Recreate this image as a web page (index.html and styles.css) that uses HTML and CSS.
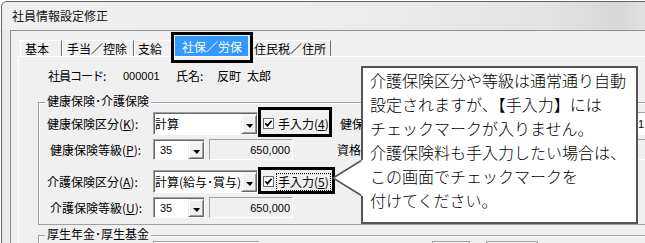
FILE: index.html
```html
<!DOCTYPE html>
<html lang="ja">
<head>
<meta charset="utf-8">
<title>社員情報設定修正</title>
<link rel="stylesheet" href="styles.css">
</head>
<body>
<div class="window">
  <div class="titlebar"><span class="title">社員情報設定修正</span></div>
  <div class="frame">
    <div class="client">
      <div class="tabs">
        <div class="tab tab-kihon">基本</div>
        <div class="tab tab-teate">手当／控除</div>
        <div class="tab tab-shikyu">支給</div>
        <div class="tab tab-sel"><span class="tab-sel-label">社保／労保</span></div>
        <div class="tab tab-jumin">住民税／住所</div>
      </div>
      <div class="panel">
        <div class="emp">
          <span class="emp-code-label">社員コード:</span>
          <span class="emp-code num">000001</span>
          <span class="emp-name-label">氏名:</span>
          <span class="emp-name">反町<span class="mei">太郎</span></span>
        </div>
        <div class="group group-1">
          <div class="group-title">健康保険･介護保険</div>
          <div class="pairs">
            <div class="pair">
              <div class="row row-tall">
                <span class="label">健康保険区分(<u>K</u>):</span>
                <div class="combo combo-wide"><span class="combo-text">計算</span><span class="combo-btn"><i class="arrow"></i></span></div>
                <div class="chk-group">
                  <svg class="chk" width="11" height="11" viewBox="0 0 11 11"><rect x="0.5" y="0.5" width="10" height="10" fill="#fff" stroke="#6b6b6b"/><path d="M2.3 5.3 L4.4 7.6 L8.6 2.8" fill="none" stroke="#000" stroke-width="1.7"/></svg>
                  <span class="chk-label">手入力(<u>4</u>)</span>
                </div>
                <span class="side-label">健保</span>
                <div class="side-field"><span class="num">1</span></div>
              </div>
              <div class="row row-short">
                <span class="label label-indent">健康保険等級(<u>P</u>):</span>
                <div class="combo combo-narrow"><span class="combo-text num">35</span><span class="combo-btn"><i class="arrow"></i></span></div>
                <div class="field"><span class="num">650,000</span></div>
                <span class="side-label side-label-2">資格</span>
                <div class="side-field side-field-ro"></div>
              </div>
            </div>
            <div class="pair">
              <div class="row row-tall">
                <span class="label">介護保険区分(<u>A</u>):</span>
                <div class="combo combo-wide"><span class="combo-text">計算(給与･賞与)</span><span class="combo-btn"><i class="arrow"></i></span></div>
                <div class="chk-group">
                  <svg class="chk" width="11" height="11" viewBox="0 0 11 11"><rect x="0.5" y="0.5" width="10" height="10" fill="#fff" stroke="#6b6b6b"/><path d="M2.3 5.3 L4.4 7.6 L8.6 2.8" fill="none" stroke="#000" stroke-width="1.7"/></svg>
                  <span class="chk-label chk-focus">手入力(<u>5</u>)</span>
                </div>
              </div>
              <div class="row row-short">
                <span class="label label-indent">介護保険等級(<u>U</u>):</span>
                <div class="combo combo-narrow"><span class="combo-text num">35</span><span class="combo-btn"><i class="arrow"></i></span></div>
                <div class="field"><span class="num">650,000</span></div>
              </div>
            </div>
          </div>
        </div>
        <div class="group group-2">
          <div class="group-title">厚生年金･厚生基金</div>
          <div class="g2-row">
            <span class="g2-spacer"></span>
            <span class="g2-combo"></span>
            <span class="g2-box g2-box-1"></span>
            <span class="g2-box g2-box-2"></span>
          </div>
        </div>
      </div>
    </div>
  </div>
</div>

<div class="hl hl-tab"></div>
<div class="hl hl-chk1"></div>
<div class="hl hl-chk2"></div>

<div class="callout">
  <p>介護保険区分や等級は通常通り自動</p>
  <p>設定されますが、【手入力】には</p>
  <p>チェックマークが入りません。</p>
  <p>介護保険料も手入力したい場合は、</p>
  <p>この画面でチェックマークを</p>
  <p>付けてください。</p>
</div>
<svg class="tail" width="40" height="52" viewBox="0 0 40 52">
  <polygon points="5,28 36.5,8.7 36.5,47.3" fill="#fff"/>
  <polyline points="33,10.8 5,28 33,45.2" fill="none" stroke="#555" stroke-width="1.6" stroke-linejoin="miter"/>
</svg>
</body>
</html>
```

FILE: styles.css
```css
html, body {
  margin: 0;
  padding: 0;
}
html {
  background: #ffffff;
  overflow: hidden;
}
body {
  position: relative;
  width: 645px;
  height: 243px;
  overflow: hidden;
  font-family: "Noto Sans CJK JP", "Noto Sans", sans-serif;
  font-size: 12px;
  color: #000;
}

.window {
  box-sizing: border-box;
  width: 644px;
  height: 242px;
  margin: 1px 0 0 1px;
  border-top: 1px solid #626262;
  border-left: 1px solid #626262;
  border-top-left-radius: 6px;
  background: #ebebeb;
  overflow: hidden;
  display: flex;
  flex-direction: column;
}

.titlebar {
  flex: none;
  box-sizing: border-box;
  height: 28px;
  padding: 0 0 1px 10px;
  display: flex;
  align-items: center;
  background: linear-gradient(to right, #f0f0f0 0%, #ececec 55%, #e3e3e3 85%, #d7d7d7 96%, #e1e1e1 100%);
}
.title {
  line-height: 14px;
  color: #111;
}

.frame {
  flex: 1;
  min-height: 0;
  display: flex;
  padding-left: 8px;
}
.client {
  flex: 1;
  min-width: 0;
  display: flex;
  flex-direction: column;
  background: #f0f0f0;
  border-top: 1px solid #8f8f8f;
  border-left: 1px solid #8f8f8f;
}

/* tabs */
.tabs {
  flex: none;
  display: flex;
  align-items: flex-end;
  height: 20px;
  margin: 5px 0 0 9px;
}
.tab {
  flex: none;
  box-sizing: border-box;
  height: 16px;
  line-height: 15px;
  border-top: 1px solid #fff;
  border-left: 1px solid #fff;
  border-right: 1px solid #6d6d6d;
  white-space: nowrap;
}
.tab-kihon { width: 42px; padding-left: 4px; }
.tab-teate { width: 72px; padding-left: 4px; }
.tab-shikyu { width: 38px; padding-left: 3px; }
.tab-sel {
  width: 79px;
  height: 20px;
  padding-left: 2px;
  border-top: 0;
}
.tab-sel-label {
  display: block;
  box-sizing: border-box;
  width: 73px;
  height: 20px;
  padding: 3px 0 0 7px;
  line-height: 16px;
  background: #3399ff;
  color: #fff;
}
.tab-jumin { width: 80px; padding-left: 2px; }

/* panel */
.panel {
  flex: 1;
  min-height: 0;
  display: flex;
  flex-direction: column;
  margin-left: 7px;
  border-top: 1px solid #fff;
  border-left: 1px solid #fff;
}

.emp {
  flex: none;
  display: flex;
  height: 16px;
  line-height: 16px;
  margin: 11px 0 0 29px;
  white-space: nowrap;
}
.emp-code-label { width: 75px; letter-spacing: -1px; }
.emp-code { width: 53px; }
.emp-name-label { width: 41px; }
.mei { margin-left: 6px; }

/* group boxes */
.group {
  flex: none;
  box-sizing: border-box;
  width: 700px;
  margin-left: 19px;
  padding-left: 8px;
  border: 1px solid #a0a0a0;
  box-shadow: inset 1px 1px 0 #fff;
}
.group-1 {
  margin-top: 18px;
  padding-bottom: 6px;
}
.group-2 {
  margin-top: 10px;
  height: 40px;
}
.group-title {
  width: max-content;
  margin: -9px 0 0 -2px;
  padding: 0 2px;
  line-height: 14px;
  background: #f0f0f0;
}

.pairs {
  display: flex;
  flex-direction: column;
  gap: 10px;
  margin-top: 4px;
}
.pair {
  display: flex;
  flex-direction: column;
  gap: 4px;
}
.row {
  display: flex;
  align-items: center;
  white-space: nowrap;
}
.row-tall { height: 23px; }
.row-short { height: 21px; }

.label {
  flex: none;
  width: 106px;
  line-height: 16px;
}
.label-indent {
  box-sizing: border-box;
  padding-left: 3px;
}

.combo {
  flex: none;
  box-sizing: border-box;
  height: 100%;
  display: flex;
  background: #fff;
  border: 1px solid;
  border-color: #a0a0a0 #fff #fff #a0a0a0;
  box-shadow: inset 1px 1px 0 #696969;
  padding: 1px 0 0 1px;
}
.combo-wide { width: 105px; }
.combo-narrow { width: 52px; }
.combo-text {
  flex: 1;
  min-width: 0;
  overflow: hidden;
  display: flex;
  align-items: center;
  line-height: 16px;
}
.combo-narrow .combo-text { padding-left: 5px; }
.combo-btn {
  flex: none;
  box-sizing: border-box;
  width: 16px;
  height: 100%;
  display: flex;
  align-items: center;
  justify-content: center;
  background: #f0f0f0;
  border: 1px solid;
  border-color: #f0f0f0 #696969 #696969 #f0f0f0;
  box-shadow: inset 1px 1px 0 #fff, inset -1px -1px 0 #a0a0a0;
}
.arrow {
  display: block;
  width: 0;
  height: 0;
  border-left: 4px solid transparent;
  border-right: 3px solid transparent;
  border-top: 4px solid #000;
  margin-top: 3px;
}

.field {
  flex: none;
  box-sizing: border-box;
  width: 84px;
  height: 100%;
  margin-left: 4px;
  padding-right: 2px;
  display: flex;
  align-items: center;
  justify-content: flex-end;
  border: 1px solid;
  border-color: #a0a0a0 #fff #fff #a0a0a0;
  background: #f0f0f0;
}

.num {
  font-family: "Liberation Sans", sans-serif;
  font-size: 11px;
}

.chk-group {
  flex: none;
  width: 82px;
  display: flex;
  align-items: center;
}
.chk {
  flex: none;
  display: block;
  margin-left: 5px;
}
.chk-label {
  margin-left: 4px;
  line-height: 16px;
}
.chk-focus {
  margin-left: 3px;
  padding: 0 1px;
  outline: 1px dotted #000;
}

.side-label {
  flex: none;
  width: 294px;
  line-height: 16px;
}
.side-label-2 {
  margin-left: 44px;
  width: 297px;
}
.side-field {
  flex: none;
  box-sizing: border-box;
  width: 100px;
  height: 100%;
  padding-left: 3px;
  display: flex;
  align-items: center;
  border: 1px solid;
  border-color: #a0a0a0 #fff #fff #a0a0a0;
  background: #fff;
}
.side-field-ro { background: #f0f0f0; }

.g2-row {
  display: flex;
  height: 21px;
}
.g2-spacer { flex: none; width: 106px; }
.g2-combo {
  flex: none;
  box-sizing: border-box;
  width: 106px;
  background: #fff;
  border-top: 1px solid #a0a0a0;
  border-left: 1px solid #a0a0a0;
}
.g2-box {
  flex: none;
  box-sizing: border-box;
  border: 1px solid #a0a0a0;
  background: #f3f3f3;
}
.g2-box-1 { margin-left: 173px; width: 38px; }
.g2-box-2 { margin-left: 16px; width: 52px; }

/* overlays */
.hl {
  position: absolute;
  box-sizing: border-box;
  border: 3px solid #000;
}
.hl-tab { left: 171px; top: 32px; width: 82px; height: 31px; }
.hl-chk1 { left: 258px; top: 107px; width: 74px; height: 30px; }
.hl-chk2 { left: 258px; top: 167px; width: 77px; height: 27px; }

.callout {
  position: absolute;
  left: 361px;
  top: 66px;
  width: 277px;
  height: 158px;
  box-sizing: border-box;
  border: 2px solid #555;
  background: #fff;
  padding-left: 7px;
  font-size: 16px;
  font-weight: 300;
  line-height: 24px;
}
.callout p {
  margin: 0;
  white-space: nowrap;
}
.tail {
  position: absolute;
  left: 328px;
  top: 150px;
  overflow: visible;
}
```
